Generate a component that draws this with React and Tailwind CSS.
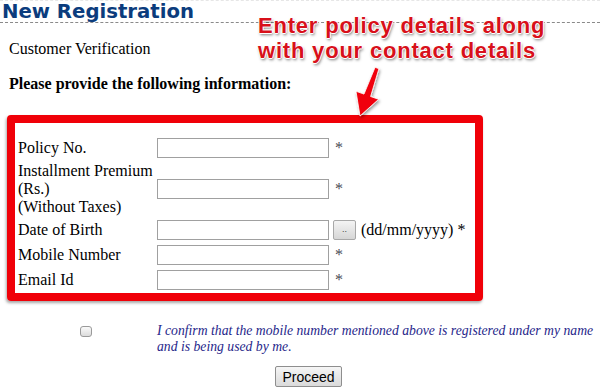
const serif = { fontFamily: '"Liberation Serif", "Times New Roman", serif' };

function Field({ label, tall, children }) {
  return (
    <div className={`flex items-center ${tall ? "h-[57px]" : "h-[25px]"}`}>
      <div className="w-[139px] text-[16px] leading-[18px] text-black">{label}</div>
      {children}
    </div>
  );
}

function TextBox() {
  return (
    <input
      type="text"
      className="w-[172px] h-[20px] border border-[#a0a0a0] bg-white outline-none px-1 text-[13px]"
    />
  );
}

function Star() {
  return <span className="ml-[6px] text-[16px] leading-[18px] text-[#4a4a55]">*</span>;
}

export default function App() {
  return (
    <div className="relative w-[600px] h-[391px] overflow-hidden bg-white text-black" style={serif}>
      {/* page heading */}
      <div className="h-[23px] border-t border-t-[#e6e6e6] border-b border-dashed border-b-[#8a8a8a] pl-[2px]">
        <h1 className="font-['DejaVu_Sans'] font-bold text-[19.7px] leading-[21px] text-[#0b3c7d]">
          New Registration
        </h1>
      </div>

      <p className="mt-[17px] pl-[9px] text-[16px] leading-[18px]">Customer Verification</p>
      <p className="mt-[17px] pl-[9px] text-[16px] leading-[18px] font-bold">
        Please provide the following information:
      </p>

      {/* highlighted form */}
      <div className="ml-[7px] mt-[22px] w-[476px] h-[186px] border-[8px] border-[#f00008] rounded-[4px] shadow-[-1px_2px_3px_rgba(0,0,0,0.35)] pl-[3px] pt-[12px]">
        <Field label="Policy No.">
          <TextBox />
          <Star />
        </Field>
        <Field
          tall
          label={
            <>
              Installment Premium
              <br />
              (Rs.)
              <br />
              (Without Taxes)
            </>
          }
        >
          <TextBox />
          <Star />
        </Field>
        <Field label="Date of Birth">
          <TextBox />
          <button className="ml-[4px] w-[23px] h-[20px] border border-[#a8a8a8] rounded-[2px] bg-gradient-to-b from-[#f4f4f4] to-[#d6d6d6] text-[9px] leading-none text-[#444] font-['Liberation_Sans']">
            ..
          </button>
          <span className="ml-[5px] text-[16px]">(dd/mm/yyyy) *</span>
        </Field>
        <Field label="Mobile Number">
          <TextBox />
          <Star />
        </Field>
        <Field label="Email Id">
          <TextBox />
          <Star />
        </Field>
      </div>

      {/* confirmation */}
      <div className="flex mt-[22px]">
        <div className="ml-[80px] mt-[3px] w-[12px] h-[11px] rounded-[3px] border border-[#9a9a9a] bg-gradient-to-b from-[#fafafa] to-[#dcdcdc]" />
        <p className="ml-[65px] whitespace-nowrap text-[13.7px] leading-[16px] italic text-[#26268a]">
          I confirm that the mobile number mentioned above is registered under my name
          <br />
          and is being used by me.
        </p>
      </div>

      <button className="ml-[275px] mt-[11px] w-[67px] h-[21px] border border-[#8e8e8e] rounded-[2px] bg-gradient-to-b from-[#f6f6f6] to-[#dadada] font-['Liberation_Sans'] text-[14px] leading-none text-black">
        Proceed
      </button>

      {/* annotation */}
      <div className="absolute left-[258px] top-[13px] font-['Liberation_Sans'] font-bold text-[22px] leading-[25px] tracking-[0.8px] text-[#d8101a] [text-shadow:1px_0_0_#fff,-1px_0_0_#fff,0_1px_0_#fff,0_-1px_0_#fff,1px_2px_3px_rgba(0,0,0,0.55)]">
        Enter policy details along
        <br />
        with your contact details
      </div>
      <svg className="absolute left-0 top-0 pointer-events-none" width="600" height="391">
        <defs>
          <filter id="sh" x="-20%" y="-20%" width="140%" height="140%">
            <feDropShadow dx="1" dy="2" stdDeviation="1.5" floodColor="#000" floodOpacity="0.4" />
          </filter>
        </defs>
        <polygon
          points="375.1,67.3 378.9,68.7 370.6,96.5 378.6,99.3 360,116 356,91.3 364,94.1"
          fill="#f00008"
          stroke="#fff"
          strokeWidth="0.8"
          filter="url(#sh)"
        />
      </svg>
    </div>
  );
}
